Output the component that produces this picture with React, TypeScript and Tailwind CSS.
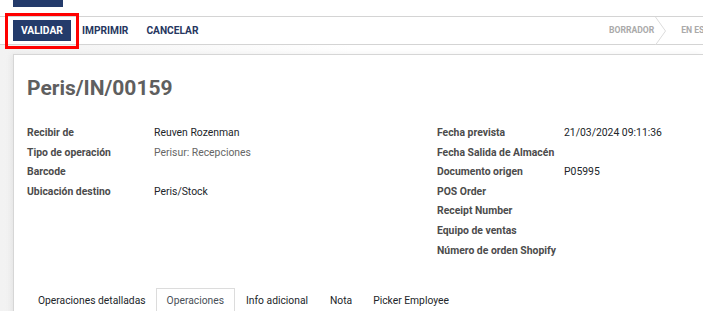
import React from 'react'

const leftFields: [string, string, string?][] = [
  ['Recibir de', 'Reuven Rozenman'],
  ['Tipo de operación', 'Perisur: Recepciones', 'muted'],
  ['Barcode', ''],
  ['Ubicación destino', 'Peris/Stock'],
]

const rightFields: [string, string][] = [
  ['Fecha prevista', '21/03/2024 09:11:36'],
  ['Fecha Salida de Almacén', ''],
  ['Documento origen', 'P05995'],
  ['POS Order', ''],
  ['Receipt Number', ''],
  ['Equipo de ventas', ''],
  ['Número de orden Shopify', ''],
]

function FieldRow({ label, value, muted }: { label: string; value: string; muted?: boolean }) {
  return (
    <div className="flex h-[19.6px] items-center">
      <div className="w-[127px] shrink-0 font-bold text-[#4c4c4c]">{label}</div>
      <div className={muted ? 'text-[#666]' : 'text-[#212529]'}>{value}</div>
    </div>
  )
}

function App() {
  return (
    <div className="h-[311px] w-[703px] overflow-hidden bg-white font-['Roboto',sans-serif] text-[10.4px]">
      {/* top strip */}
      <div className="h-[17px] border-b border-[#d4d4d4]">
        <div className="ml-[13px] h-[7px] w-[50px] bg-[#243b6b]" />
      </div>

      {/* control panel */}
      <div className="relative flex h-[28px] items-center whitespace-nowrap border-b border-[#d4d4d4] pl-[13px]">
        <div className="pointer-events-none absolute left-[5px] top-[-4px] z-10 h-[36px] w-[74px] border-[3px] border-[#ff0000]" />
        <div className="flex w-[596px] shrink-0 items-center">
          <button className="flex h-[21px] w-[58px] items-center justify-center bg-[#243b6b] text-[10.3px] font-bold text-white">
            VALIDAR
          </button>
          <span className="ml-[11px] text-[10.2px] font-bold text-[#27375f]">IMPRIMIR</span>
          <span className="ml-[18px] text-[10.2px] font-bold text-[#27375f]">CANCELAR</span>
        </div>
        <div className="flex h-full shrink-0 items-center">
          <span className="text-[8.6px] font-bold text-[#aaa]">BORRADOR</span>
          <svg width="12" height="28" viewBox="0 0 12 28" className="ml-[1px]">
            <path d="M0.5 0 L10.5 14 L0.5 28" fill="none" stroke="#dcdcdc" strokeWidth="1" />
          </svg>
          <span className="ml-[14px] text-[8.6px] font-bold text-[#aaa]">EN ESPERA</span>
        </div>
      </div>

      {/* content area */}
      <div className="h-full bg-gradient-to-r from-[#f2f2f2] via-white to-white pl-[13px] pt-[9px]">
        <div className="h-full border-l border-t border-[#d6d6d6] bg-white pl-[13px] shadow-[-2px_0_6px_rgba(0,0,0,0.06)]">
          <h1 className="pt-[19px] text-[21px] font-bold leading-[28px] text-[#5f5f5f]">Peris/IN/00159</h1>

          <div className="mt-[21px] flex">
            <div className="w-[410px]">
              {leftFields.map(([l, v, m]) => (
                <FieldRow key={l} label={l} value={v} muted={m === 'muted'} />
              ))}
            </div>
            <div>
              {rightFields.map(([l, v]) => (
                <FieldRow key={l} label={l} value={v} />
              ))}
            </div>
          </div>

          <div className="mt-[23px] flex h-[30px] items-end text-[10.3px] text-[#212529]">
            <div className="flex h-[25px] items-center pl-[11px] pr-[10px]">Operaciones detalladas</div>
            <div className="flex h-[25px] items-center border-x border-t border-[#dcdcdc] px-[10px] text-[#495057]">
              Operaciones
            </div>
            <div className="flex h-[25px] items-center px-[11px]">Info adicional</div>
            <div className="flex h-[25px] items-center px-[11px]">Nota</div>
            <div className="flex h-[25px] items-center px-[10px]">Picker Employee</div>
          </div>
        </div>
      </div>
    </div>
  )
}

export default App
